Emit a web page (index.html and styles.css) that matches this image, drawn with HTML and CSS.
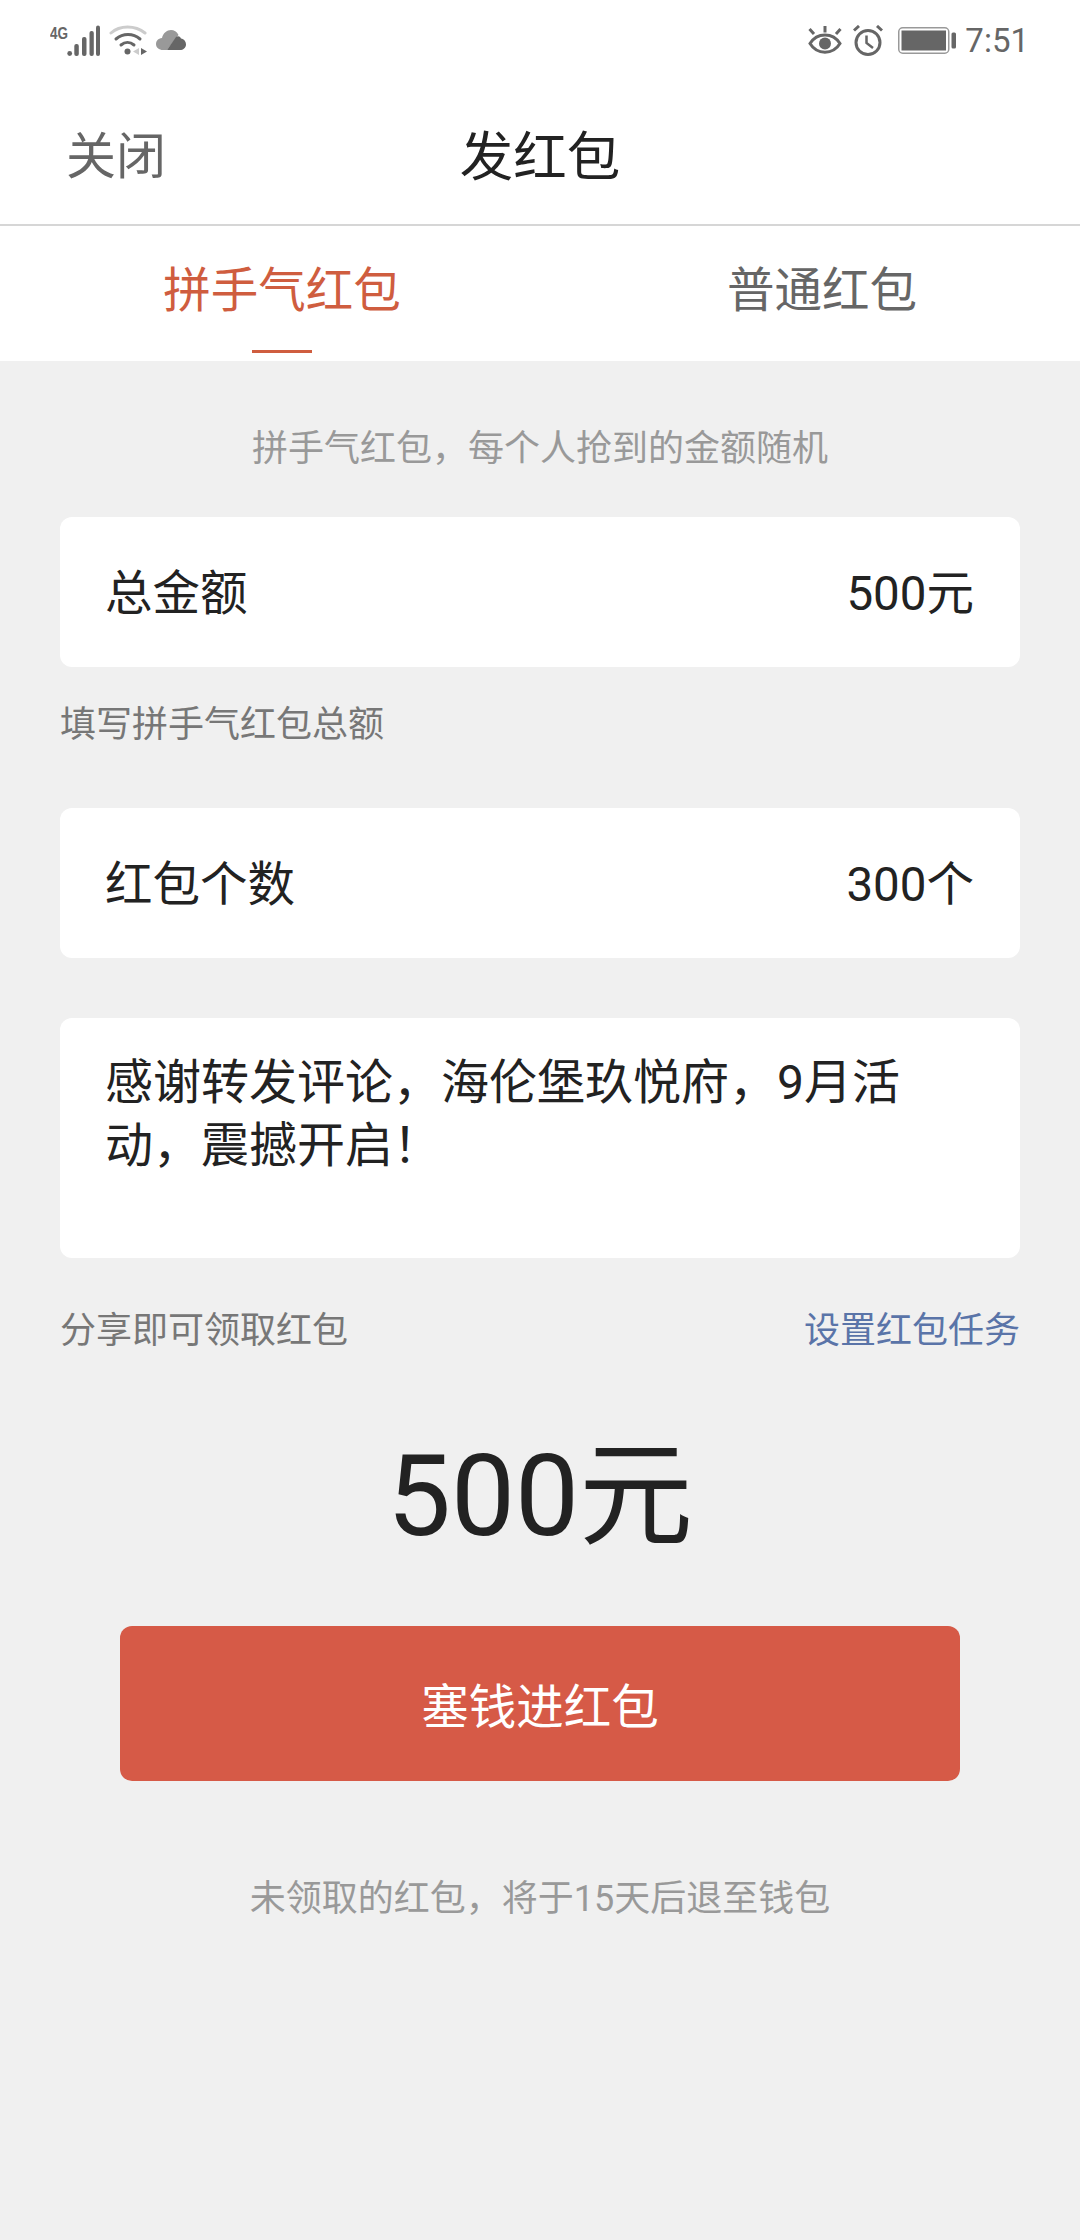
FILE: index.html
```html
<!DOCTYPE html>
<html lang="zh">

<head>
    <meta charset="UTF-8">
    <meta name="viewport" content="width=device-width, initial-scale=1.0">
    <title>发红包</title>
    <link rel="stylesheet" href="styles.css">
</head>

<body>
    <div class="status-bar">
        <div class="status-left">
            <svg class="icon-signal" viewBox="0 0 50 31">
                <text x="0" y="13.500" class="net-label" textLength="18" lengthAdjust="spacingAndGlyphs">4G</text>
                <circle cx="19.700" cy="28.500" r="2.400" fill="#666"/>
                <rect x="24.300" y="19" width="4.500" height="12" rx="2" fill="#666"/>
                <rect x="32" y="12" width="4.500" height="19" rx="2" fill="#666"/>
                <rect x="39.500" y="6" width="4.300" height="25" rx="2" fill="#666"/>
                <rect x="46" y="0.500" width="4" height="30.500" rx="2" fill="#666"/>
            </svg>
            <svg class="icon-wifi" viewBox="0 0 38 31">
                <path d="M2 8C11 0 26 0 36 8" fill="none" stroke="#ccc" stroke-width="3" stroke-linecap="round"/>
                <path d="M7 14C14 8 24 8 31 14" fill="none" stroke="#666" stroke-width="3" stroke-linecap="round"/>
                <path d="M12 20C16 16.500 21 16.500 25 20" fill="none" stroke="#666" stroke-width="3" stroke-linecap="round"/>
                <circle cx="18.500" cy="26.500" r="3" fill="#666"/>
                <path d="M30 23V30L24 26.500Z" fill="#ccc"/>
                <path d="M32 23V30L38 26.500Z" fill="#666"/>
            </svg>
            <svg class="icon-cloud" viewBox="0 0 30 20">
                <path d="M7 20C3 20 0 17.500 0 14C0 11 2 8.500 6 8C7 3 11 0 15 0C18 0 21 1.500 22.500 5L11 20Z" fill="#999"/>
                <path d="M11 20L20 7C22 5.500 24 6 25 8.500C28 9 30 11.500 30 14.500C30 18 27 20 24 20Z" fill="#666"/>
            </svg>
        </div>
        <div class="status-right">
            <svg class="icon-eye" viewBox="0 0 34 28">
                <path d="M2 17.500C9 6 25 6 32 17.500C25 29 9 29 2 17.500Z" fill="none" stroke="#666" stroke-width="3"/>
                <circle cx="17" cy="17.500" r="6" fill="#666"/>
                <path d="M1.500 3L6 8M17 0V6.500M32.500 3L28 8" stroke="#666" stroke-width="3"/>
            </svg>
            <svg class="icon-alarm" viewBox="0 0 30 31">
                <circle cx="15" cy="17.500" r="12" fill="none" stroke="#666" stroke-width="3"/>
                <path d="M13.500 10.500V18L20 23" fill="none" stroke="#666" stroke-width="2.500"/>
                <path d="M1 5.500L6 1M29 5.500L24 1" stroke="#666" stroke-width="3"/>
            </svg>
            <svg class="icon-battery" viewBox="0 0 58 27">
                <rect x="0.750" y="0.750" width="50" height="25.500" rx="4" fill="none" stroke="#999" stroke-width="1.500"/>
                <rect x="3.500" y="3.500" width="44.500" height="20" fill="#666"/>
                <rect x="53.500" y="5.500" width="4.500" height="16" rx="1.500" fill="#666"/>
            </svg>
            <span class="clock">7:51</span>
        </div>
    </div>

    <header class="top-bar">
        <span class="close-link">关闭</span>
        <h1 class="page-title">发红包</h1>
    </header>

    <nav class="tabs">
        <div class="tab tab-active">拼手气红包</div>
        <div class="tab">普通红包</div>
    </nav>

    <main class="content">
        <p class="hint">拼手气红包，每个人抢到的金额随机</p>

        <div class="card row-card">
            <span>总金额</span>
            <span>500元</span>
        </div>
        <p class="field-note">填写拼手气红包总额</p>

        <div class="card row-card count-card">
            <span>红包个数</span>
            <span>300个</span>
        </div>

        <div class="card message-card">感谢转发评论，海伦堡玖悦府，9月活动，震撼开启！</div>

        <div class="task-row">
            <span>分享即可领取红包</span>
            <span class="task-link">设置红包任务</span>
        </div>

        <div class="total">500元</div>

        <button class="submit-button">塞钱进红包</button>

        <p class="footer-note">未领取的红包，将于15天后退至钱包</p>
    </main>
</body>

</html>
```

FILE: styles.css
```css
* {
    margin: 0;
    padding: 0;
    box-sizing: border-box;
}

body {
    font-family: Roboto, "Noto Sans CJK SC", sans-serif;
    background-color: #f0f0f0;
    color: #222;
    width: 1080px;
    height: 2240px;
    overflow: hidden;
}

.status-bar {
    background-color: #fff;
    height: 80px;
    padding: 0 51px 0 50px;
    display: flex;
    justify-content: space-between;
    align-items: center;
}

.status-left,
.status-right {
    display: flex;
    align-items: center;
}

.icon-signal {
    width: 50px;
    height: 31px;
}

.net-label {
    font-family: "Liberation Sans", sans-serif;
    font-size: 17px;
    font-weight: 700;
    fill: #666;
}

.icon-wifi {
    width: 38px;
    height: 31px;
    margin-left: 9px;
}

.icon-cloud {
    width: 30px;
    height: 20px;
    margin-left: 9px;
}

.icon-eye {
    width: 34px;
    height: 28px;
}

.icon-alarm {
    width: 30px;
    height: 31px;
    margin-left: 11px;
}

.icon-battery {
    width: 58px;
    height: 27px;
    margin-left: 15px;
}

.clock {
    font-size: 33px;
    color: #666;
    margin-left: 9px;
}

.top-bar {
    background-color: #fff;
    height: 146px;
    border-bottom: 2px solid #d6d6d6;
    display: flex;
    align-items: center;
    justify-content: center;
    position: relative;
}

.close-link {
    position: absolute;
    left: 66px;
    font-size: 50px;
    color: #666;
}

.page-title {
    font-size: 53.500px;
    font-weight: 400;
    color: #222;
}

.tabs {
    background-color: #fff;
    height: 135px;
    display: grid;
    grid-template-columns: 564px 516px;
}

.tab {
    font-size: 47.500px;
    color: #666;
    text-align: center;
    padding-top: 26px;
    position: relative;
}

.tab-active {
    color: #cf5d3f;
}

.tab-active::after {
    content: "";
    position: absolute;
    left: 252px;
    bottom: 8px;
    width: 60px;
    height: 3px;
    background-color: #cf5d3f;
}

.content {
    padding: 0 60px;
}

.hint {
    font-size: 36px;
    color: #999;
    text-align: center;
    margin-top: 62px;
    line-height: 52px;
}

.card {
    background-color: #fff;
    border-radius: 12px;
    font-size: 47.500px;
    color: #222;
}

.row-card {
    height: 150px;
    padding: 0 46px 5px 45px;
    margin-top: 42px;
    display: flex;
    justify-content: space-between;
    align-items: center;
}

.field-note {
    font-size: 36px;
    color: #777;
    line-height: 52px;
    margin-top: 32px;
}

.count-card {
    margin-top: 57px;
}

.message-card {
    height: 240px;
    margin-top: 60px;
    padding: 33px 100px 0 45px;
    font-size: 48px;
    line-height: 63px;
}

.task-row {
    display: flex;
    justify-content: space-between;
    font-size: 36px;
    color: #777;
    line-height: 52px;
    margin-top: 47px;
}

.task-link {
    color: #5a74a8;
}

.total {
    font-size: 114px;
    color: #222;
    text-align: center;
    line-height: 140px;
    margin-top: 69px;
}

.submit-button {
    display: block;
    width: 840px;
    height: 155px;
    margin: 60px auto 0;
    background-color: #d65a47;
    color: #fff;
    border: none;
    border-radius: 12px;
    font-family: inherit;
    font-size: 47.500px;
}

.footer-note {
    font-size: 36px;
    color: #999;
    text-align: center;
    line-height: 52px;
    margin-top: 92px;
}
```
